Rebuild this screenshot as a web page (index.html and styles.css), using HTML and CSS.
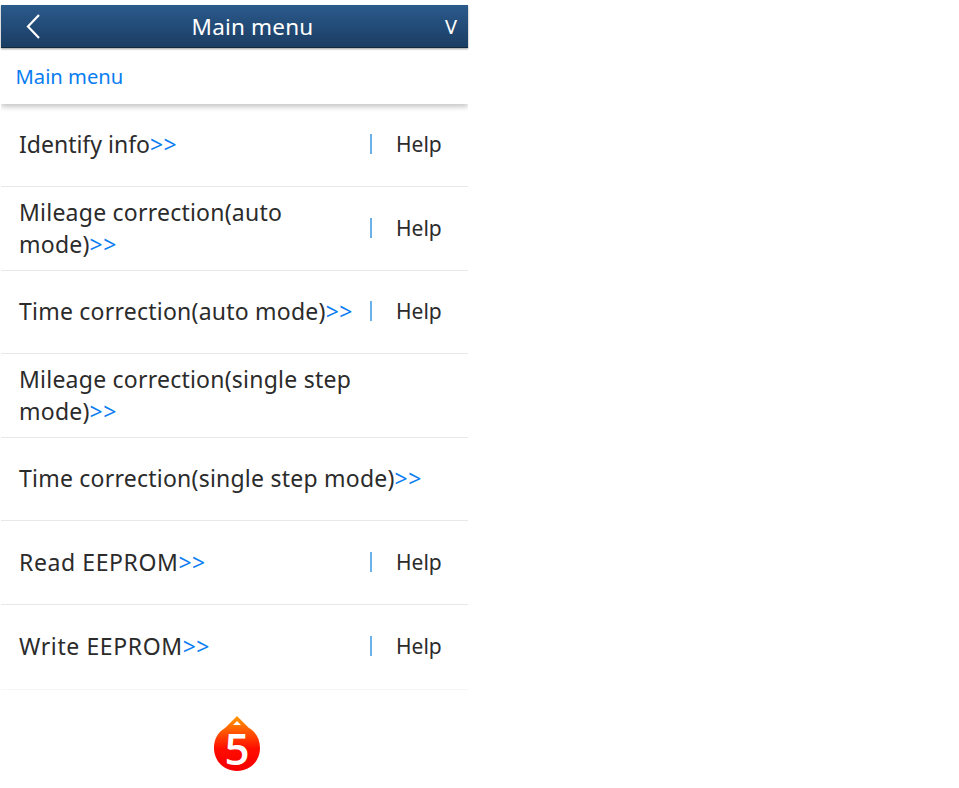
FILE: index.html
```html
<!DOCTYPE html>
<html lang="en">
<head>
  <meta charset="UTF-8" />
  <meta name="viewport" content="width=device-width, initial-scale=1.0"/>
  <title>Main menu</title>
  <link rel="stylesheet" href="styles.css">
</head>
<body>
  <div class="container">
    <div class="topbar">
      <svg class="back" width="18" height="26" viewBox="0 0 18 26">
        <path d="M15 2 L4 13.5 L15 25" fill="none" stroke="#fff" stroke-width="2.2" />
      </svg>
      <span class="title">Main menu</span>
      <span class="version">V</span>
    </div>
    <div class="crumb">Main menu</div>

    <div class="row">
      <div class="label tight">Identify info<span class="more">&gt;&gt;</span></div>
      <div class="help"><span class="bar"></span>Help</div>
    </div>
    <div class="row">
      <div class="label">Mileage correction(auto<br>mode)<span class="more">&gt;&gt;</span></div>
      <div class="help"><span class="bar"></span>Help</div>
    </div>
    <div class="row">
      <div class="label">Time correction(auto mode)<span class="more">&gt;&gt;</span></div>
      <div class="help"><span class="bar"></span>Help</div>
    </div>
    <div class="row">
      <div class="label">Mileage correction(single step<br>mode)<span class="more">&gt;&gt;</span></div>
    </div>
    <div class="row">
      <div class="label wide">Time correction(single step mode)<span class="more">&gt;&gt;</span></div>
    </div>
    <div class="row">
      <div class="label caps">Read EEPROM<span class="more">&gt;&gt;</span></div>
      <div class="help"><span class="bar"></span>Help</div>
    </div>
    <div class="row last">
      <div class="label caps">Write EEPROM<span class="more">&gt;&gt;</span></div>
      <div class="help"><span class="bar"></span>Help</div>
    </div>

    <div class="step">
      <svg class="drop" width="48" height="58" viewBox="0 0 48 58">
        <defs>
          <linearGradient id="dropFill" x1="0" y1="0" x2="0" y2="1">
            <stop offset="0" stop-color="#ff9a00" />
            <stop offset="0.6" stop-color="#ff0c00" />
            <stop offset="1" stop-color="#f40000" />
          </linearGradient>
        </defs>
        <path d="M24 1 L36 13 C43 17 47 24 47 33 C47 46 37 56 24 56 C11 56 1 46 1 33 C1 24 5 17 12 13 Z" fill="url(#dropFill)" />
        <path d="M24 6 L28 10 L20 10 Z" fill="#fff" />
      </svg>
      <span class="step-num">5</span>
    </div>
  </div>
</body>
</html>
```

FILE: styles.css
```css
body {
  margin: 0;
  font-family: "Noto Sans", Arial, sans-serif;
  background-color: #fff;
}
.container {
  width: 467px;
  margin-left: 1px;
  padding-top: 5px;
}
.topbar {
  height: 42px;
  display: flex;
  align-items: center;
  position: relative;
  color: #fff;
  background: linear-gradient(#2a5a8c, #1b3d63);
  border-bottom: 1px solid #12283f;
  box-shadow: 0 1px 2px rgba(0,0,0,0.4);
}
.back {
  margin-left: 23px;
}
.title {
  position: absolute;
  left: 36px;
  right: 0;
  text-align: center;
  font-size: 22.5px;
  letter-spacing: 0.2px;
}
.version {
  margin-left: auto;
  margin-right: 11px;
  font-size: 20px;
}
.crumb {
  height: 55.5px;
  line-height: 56px;
  padding-left: 14.5px;
  font-size: 20.2px;
  color: #0a7df0;
  box-shadow: 0 3px 5px rgba(0,0,0,0.22);
  clip-path: inset(0 0 -10px 0);
}
.row {
  height: 81.5px;
  padding-bottom: 1px;
  display: flex;
  align-items: center;
  border-bottom: 1px solid #e8e8e8;
  color: #2b2b2b;
}
.row.last {
  height: 82px;
  padding-bottom: 2.5px;
  border-bottom-color: #f6f6f6;
}
.label {
  width: 340px;
  padding-left: 18px;
  font-size: 23px;
  letter-spacing: 0.23px;
  line-height: 32px;
}
.label.wide {
  width: 440px;
}
.label.tight {
  letter-spacing: 0;
}
.label.caps {
  letter-spacing: 0.6px;
}
.more {
  color: #0a7df0;
  letter-spacing: 0.4px;
}
.help {
  display: flex;
  align-items: center;
  margin-left: 11px;
  font-size: 21px;
}
.bar {
  width: 2px;
  height: 20px;
  margin-right: 24px;
  background: #6ab0ea;
}
.step {
  height: 90px;
  display: flex;
  justify-content: center;
  position: relative;
  padding-top: 25px;
  padding-left: 5px;
}
.drop {
  width: 48px;
  height: 58px;
}
.step-num {
  position: absolute;
  left: 5px;
  right: 0;
  top: 30px;
  text-align: center;
  color: #fff;
  font-family: "Open Sans", sans-serif;
  font-size: 44px;
  font-weight: 600;
  line-height: 56px;
}
```
